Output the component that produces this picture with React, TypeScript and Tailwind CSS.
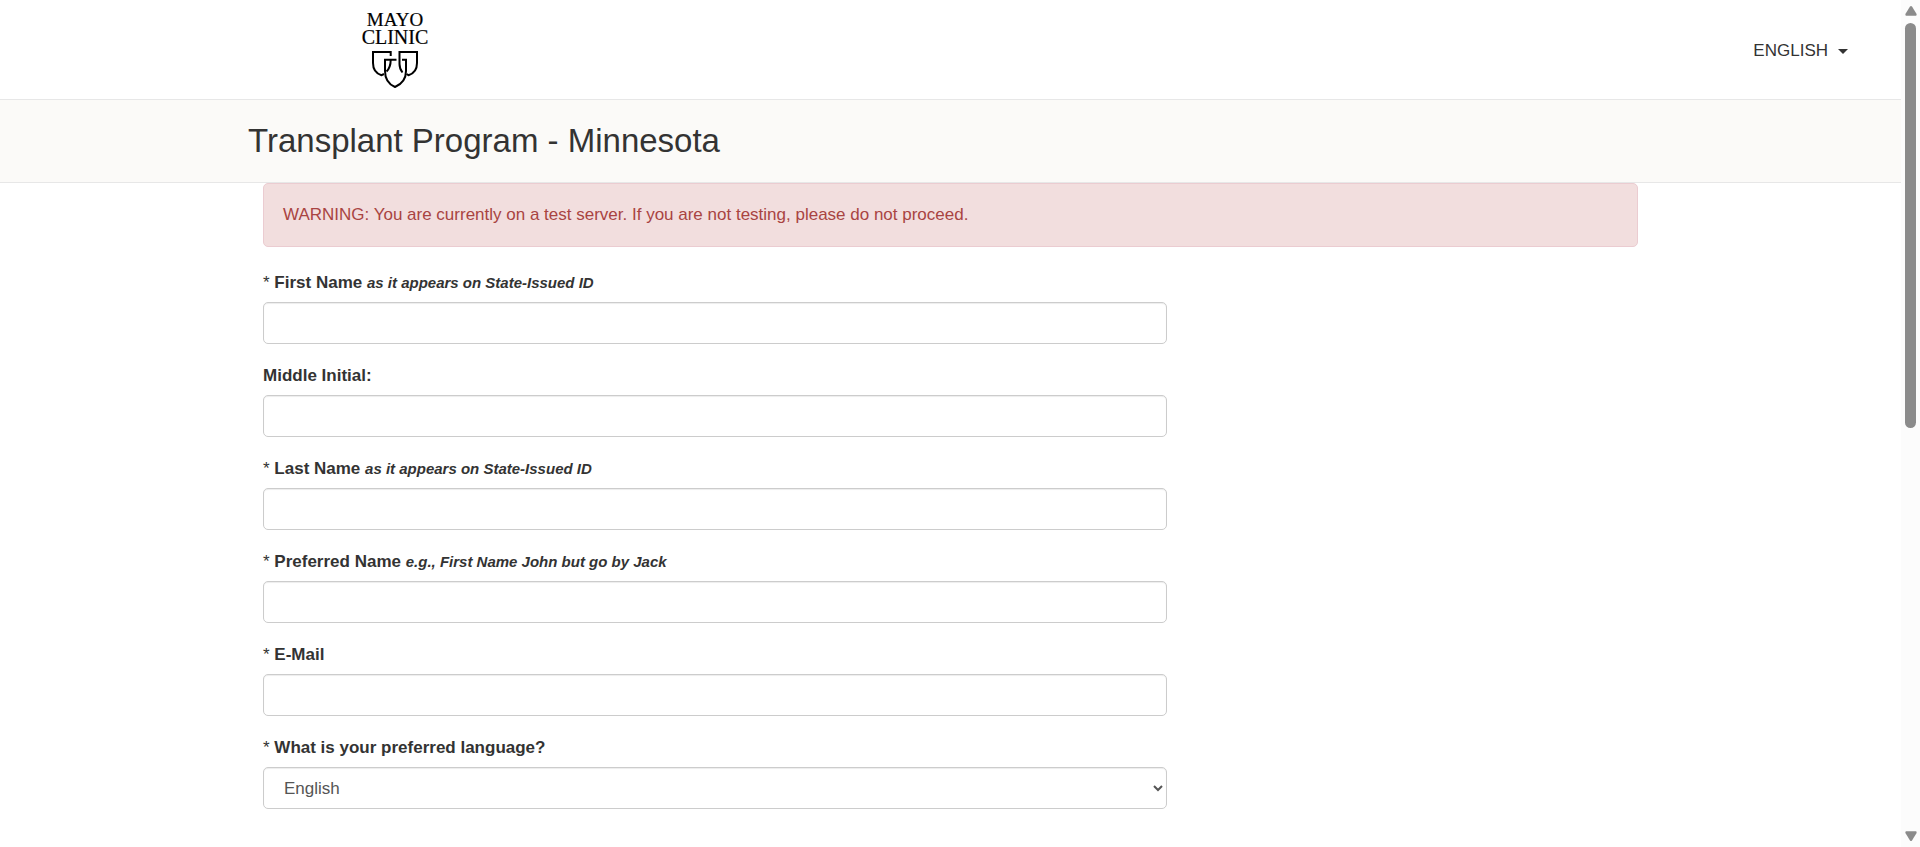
import type { ReactNode } from "react";

type FieldProps = {
  id: string;
  label: string;
  required?: boolean;
  hint?: string;
  children: ReactNode;
};

const controlClass =
  "block h-[42px] w-full rounded-[5px] border border-[#cccccc] bg-white px-4 text-[#555555] shadow-[inset_0_1px_1px_rgba(0,0,0,0.075)] outline-none focus:border-[#66afe9]";

function Field({ id, label, required, hint, children }: FieldProps) {
  return (
    <div>
      <label htmlFor={id} className="mb-[7px] block font-bold">
        {required && <span className="font-normal">* </span>}
        {label}
        {hint && " "}
        {hint && <em className="text-[15px]">{hint}</em>}
      </label>
      {children}
    </div>
  );
}

function Logo() {
  return (
    <svg
      role="img"
      aria-label="Mayo Clinic"
      viewBox="0 0 70 80"
      className="block h-20 w-[70px] overflow-visible"
      fill="none"
      stroke="#000"
    >
      <g
        fill="#000"
        stroke="#000"
        strokeWidth="0.2"
        textAnchor="middle"
        fontFamily="'Liberation Serif', serif"
      >
        <text x="35" y="16" fontSize="19">
          MAYO
        </text>
        <text x="35" y="34" fontSize="20">
          CLINIC
        </text>
      </g>
      <g strokeWidth="2">
        <path d="M30.700 46V42H13V53C13 59.500 16 63.500 21.500 65.200L24 64" />
        <path d="M30.700 49.700C30.700 56 29 59 26.500 61.500" />
        <path d="M42.500 62.500C40.500 60 39.500 57.500 39.500 54V42H57V53C57 59.500 54 63.500 48.500 65.200L46.500 64" />
        <path d="M36.500 49.700H25V61C25 69 28 74 35 77C42 74 46 69 46 61V49.700H42" />
      </g>
    </svg>
  );
}

const textFields = [
  { id: "first-name", label: "First Name", required: true, hint: "as it appears on State-Issued ID", type: "text" },
  { id: "middle-initial", label: "Middle Initial:", required: false, hint: "", type: "text" },
  { id: "last-name", label: "Last Name", required: true, hint: "as it appears on State-Issued ID", type: "text" },
  { id: "preferred-name", label: "Preferred Name", required: true, hint: "e.g., First Name John but go by Jack", type: "text" },
  { id: "email", label: "E-Mail", required: true, hint: "", type: "email" },
];

function ScrollTrack() {
  return (
    <div aria-hidden="true" className="flex w-[19px] shrink-0 flex-col items-center bg-[#fcfcfc] py-[5px]">
      <svg viewBox="0 0 12 11" className="h-[11px] w-3 shrink-0" fill="#8b8b8b">
        <path d="M5 1.500Q6 .3 7 1.500L11.600 9Q12 10.500 10.800 10.700H1.200Q0 10.500.4 9Z" />
      </svg>
      <div className="mt-[7px] h-[405px] w-[11px] rounded-full bg-[#8b8b8b]" />
      <svg viewBox="0 0 12 11" className="mt-auto h-[11px] w-3 shrink-0" fill="#8b8b8b">
        <path d="M5 9.500Q6 10.700 7 9.500L11.600 2Q12 .5 10.800.3H1.200Q0 .5.4 2Z" />
      </svg>
    </div>
  );
}

export default function App() {
  return (
    <div className="flex h-screen bg-white font-['Liberation_Sans',Arial,sans-serif] text-[17px] leading-6 text-[#333333]">
      <div className="min-w-0 flex-1 overflow-x-hidden overflow-y-auto [scrollbar-width:none]">
        <header className="flex items-center justify-between border-b border-[#e7e7e7] pt-[10px] pr-[53px] pb-[9px] pl-[360px]">
          <a href="#home">
            <Logo />
          </a>
          <button type="button" className="flex items-center gap-[10px] pt-[2px]">
            ENGLISH
            <svg viewBox="0 0 10 5" className="h-[5px] w-[10px]" fill="#333333">
              <path d="M0 0H10L5 5Z" />
            </svg>
          </button>
        </header>

        <div className="border-b border-[#e7e7e7] bg-[#fbfaf8]">
          <h1 className="mx-auto max-w-[1405px] py-[21px] text-[33px] leading-10">
            Transplant Program - Minnesota
          </h1>
        </div>

        <main className="mx-auto max-w-[1413px] px-[19px]">
          <div role="alert" className="rounded-[5px] border border-[#ebccd1] bg-[#f2dede] p-[19px] text-[#a94442]">
            WARNING: You are currently on a test server. If you are not testing, please do not proceed.
          </div>

          <form className="mt-6 flex w-[904px] max-w-full flex-col gap-5">
            {textFields.map((f) => (
              <Field key={f.id} id={f.id} label={f.label} required={f.required} hint={f.hint}>
                <input id={f.id} name={f.id} type={f.type} required={f.required} className={controlClass} />
              </Field>
            ))}
            <Field id="language" label="What is your preferred language?" required>
              <select id="language" name="language" defaultValue="English" className={controlClass + " pr-0"}>
                <option>English</option>
                <option>Español</option>
              </select>
            </Field>
          </form>
        </main>
      </div>
      <ScrollTrack />
    </div>
  );
}
